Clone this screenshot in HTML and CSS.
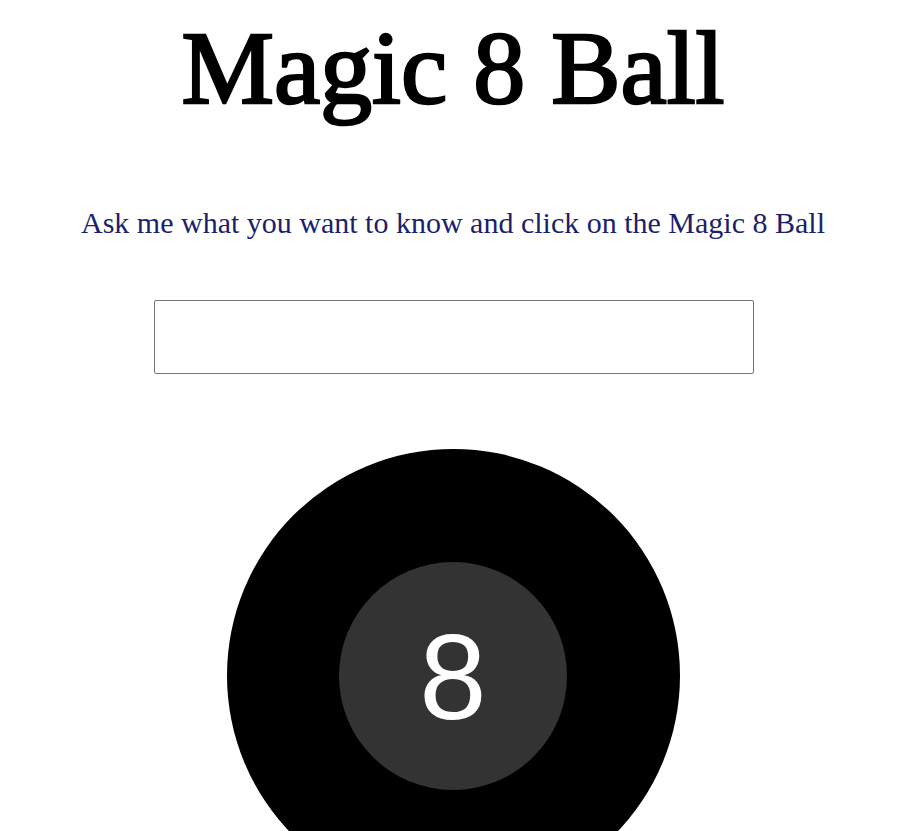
FILE: index.html
```html
<!DOCTYPE html>
<html lang="en">
<head>
<meta charset="utf-8">
<title>Magic 8 Ball</title>
<link rel="stylesheet" href="styles.css">
</head>
<body>
<main class="page">
  <h1 class="title">Magic 8 Ball</h1>
  <p class="prompt">Ask me what you want to know and click on the Magic 8 Ball</p>
  <input class="question" type="text" aria-label="Your question">
  <div class="ball">
    <div class="window"><span class="eight">8</span></div>
  </div>
</main>
</body>
</html>
```
FILE: styles.css
```css
html, body {
  margin: 0;
  padding: 0;
  background: #ffffff;
  overflow: hidden;
}

.page {
  display: flex;
  flex-direction: column;
  align-items: center;
  padding-top: 10px;
}

.title {
  margin: 0;
  font-family: "Liberation Serif", "DejaVu Serif", serif;
  font-weight: normal;
  font-size: 104px;
  line-height: 115px;
  color: #000000;
  -webkit-text-stroke: 2.6px #000000;
  paint-order: stroke fill;
}

.prompt {
  margin: 81px 0 0;
  font-family: "Liberation Serif", serif;
  font-size: 30px;
  line-height: 34px;
  color: #1c1f6e;
}

.question {
  box-sizing: border-box;
  width: 600px;
  height: 74px;
  margin-top: 60px;
  margin-left: 2px;
  border: 1px solid #767676;
  border-radius: 2px;
  background: #fff;
  font-size: 24px;
  padding: 0 10px;
}

.ball {
  margin-top: 75px;
  width: 453px;
  height: 453px;
  border-radius: 50%;
  background: #000;
  display: flex;
  align-items: center;
  justify-content: center;
  flex-shrink: 0;
}

.window {
  width: 228px;
  height: 228px;
  border-radius: 50%;
  background: #333333;
  display: flex;
  align-items: center;
  justify-content: center;
}

.eight {
  font-family: "Liberation Sans", Arial, sans-serif;
  font-size: 121px;
  line-height: 1;
  color: #ffffff;
  transform: translateY(2px);
}
```
